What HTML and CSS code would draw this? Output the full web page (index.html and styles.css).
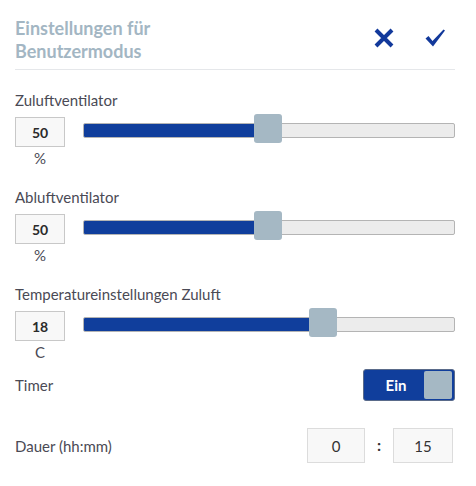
FILE: index.html
```html
<!DOCTYPE html>
<html lang="de">
<head>
<meta charset="utf-8">
<link rel="stylesheet" href="styles.css">
</head>
<body>
<div class="panel">
  <div class="header">
    <div class="title">Einstellungen für<br>Benutzermodus</div>
    <div class="actions">
      <svg class="icon" width="22" height="20" viewBox="0 0 22 20"><path d="M3 2 L19 18 M19 2 L3 18" stroke="#12399b" stroke-width="4" stroke-linecap="butt" fill="none"/></svg>
      <svg class="icon" width="22" height="20" viewBox="0 0 22 20"><path d="M1.5 10.5 L4.5 8 L8.5 13 L19.5 1.5 L21 2.5 L9 18.5 Z" fill="#12399b"/></svg>
    </div>
  </div>

  <div class="section">
    <div class="label">Zuluftventilator</div>
    <div class="row">
      <div class="valuecol">
        <div class="valuebox">50</div>
        <div class="unit">%</div>
      </div>
      <div class="slider">
        <div class="track"><div class="fill" style="width:50%"></div></div>
        <div class="thumb" style="left:calc((100% - 28px) * 0.497)"></div>
      </div>
    </div>
  </div>

  <div class="section">
    <div class="label">Abluftventilator</div>
    <div class="row">
      <div class="valuecol">
        <div class="valuebox">50</div>
        <div class="unit">%</div>
      </div>
      <div class="slider">
        <div class="track"><div class="fill" style="width:50%"></div></div>
        <div class="thumb" style="left:calc((100% - 28px) * 0.497)"></div>
      </div>
    </div>
  </div>

  <div class="section">
    <div class="label">Temperatureinstellungen Zuluft</div>
    <div class="row">
      <div class="valuecol">
        <div class="valuebox">18</div>
        <div class="unit">C</div>
      </div>
      <div class="slider">
        <div class="track"><div class="fill" style="width:66%"></div></div>
        <div class="thumb" style="left:calc((100% - 28px) * 0.657)"></div>
      </div>
    </div>
  </div>

  <div class="line timer">
    <div class="label2">Timer</div>
    <div class="toggle">
      <span class="toggletext">Ein</span>
      <span class="knob"></span>
    </div>
  </div>

  <div class="line duration">
    <div class="label2">Dauer (hh:mm)</div>
    <div class="time">
      <div class="timebox small">0</div>
      <div class="colon">:</div>
      <div class="timebox">15</div>
    </div>
  </div>
</div>
</body>
</html>
```

FILE: styles.css
```css
html, body {
  margin: 0;
  padding: 0;
  background: #ffffff;
}
body {
  font-family: "Source Sans Pro", Lato, "Open Sans", sans-serif;
  color: #4a4a55;
}
.panel {
  width: 440px;
  padding: 0 21px 0 15px;
}
.header {
  display: flex;
  justify-content: space-between;
  align-items: center;
  padding: 17px 0 6px;
  border-bottom: 1px solid #e5e7ea;
}
.title {
  font-size: 18px;
  font-weight: 700;
  line-height: 23px;
  color: #a3b6c3;
}
.actions {
  display: flex;
  gap: 29px;
  padding-right: 9px;
  margin-top: -4px;
}
.icon {
  display: block;
}
.section {
  padding-top: 21px;
  height: 76px;
}
.label {
  font-size: 15px;
  line-height: 18px;
  margin-bottom: 8px;
}
.row {
  display: flex;
  align-items: flex-start;
  gap: 18px;
}
.valuecol {
  width: 50px;
  display: flex;
  flex-direction: column;
  align-items: center;
}
.valuebox {
  box-sizing: border-box;
  width: 50px;
  height: 30px;
  border: 1px solid #c8c8c8;
  background: #f8f8f8;
  font-weight: 700;
  font-size: 14px;
  color: #2b2b2b;
  display: flex;
  align-items: center;
  justify-content: center;
}
.unit {
  font-size: 15px;
  line-height: 18px;
  margin-top: 2px;
}
.slider {
  position: relative;
  flex: 1;
  height: 30px;
}
.track {
  box-sizing: border-box;
  margin-top: 6px;
  height: 15px;
  border: 1px solid #b4b4b4;
  border-radius: 2px;
  background: #ececec;
  overflow: hidden;
}
.fill {
  height: 100%;
  background: #103e9c;
}
.thumb {
  position: absolute;
  top: -3px;
  width: 28px;
  height: 29px;
  border-radius: 3px;
  background: #a5b8c4;
}
.line {
  display: flex;
  justify-content: space-between;
  align-items: center;
}
.timer {
  margin-top: 8px;
  height: 32px;
}
.duration {
  margin-top: 27px;
  height: 35px;
}
.label2 {
  font-size: 15px;
}
.toggle {
  box-sizing: border-box;
  width: 92px;
  height: 32px;
  background: #103e9c;
  border: 1px solid #5a6b8a;
  border-radius: 3px;
  display: flex;
  align-items: center;
  padding: 1px 2px 1px 0;
}
.toggletext {
  flex: 1;
  text-align: center;
  color: #ffffff;
  font-weight: 700;
  font-size: 15px;
  padding-left: 4px;
}
.knob {
  width: 28px;
  height: 28px;
  border-radius: 2px;
  background: #a5b8c4;
}
.time {
  display: flex;
  align-items: center;
  padding-right: 2px;
}
.timebox {
  box-sizing: border-box;
  width: 60px;
  height: 35px;
  border: 1px solid #dcdcdc;
  background: #f8f8f8;
  font-size: 15px;
  color: #333;
  display: flex;
  align-items: center;
  justify-content: center;
}
.timebox.small {
  width: 58px;
}
.colon {
  width: 28px;
  text-align: center;
  font-weight: 700;
  font-size: 16px;
  color: #333;
  margin-top: -3px;
}
```
